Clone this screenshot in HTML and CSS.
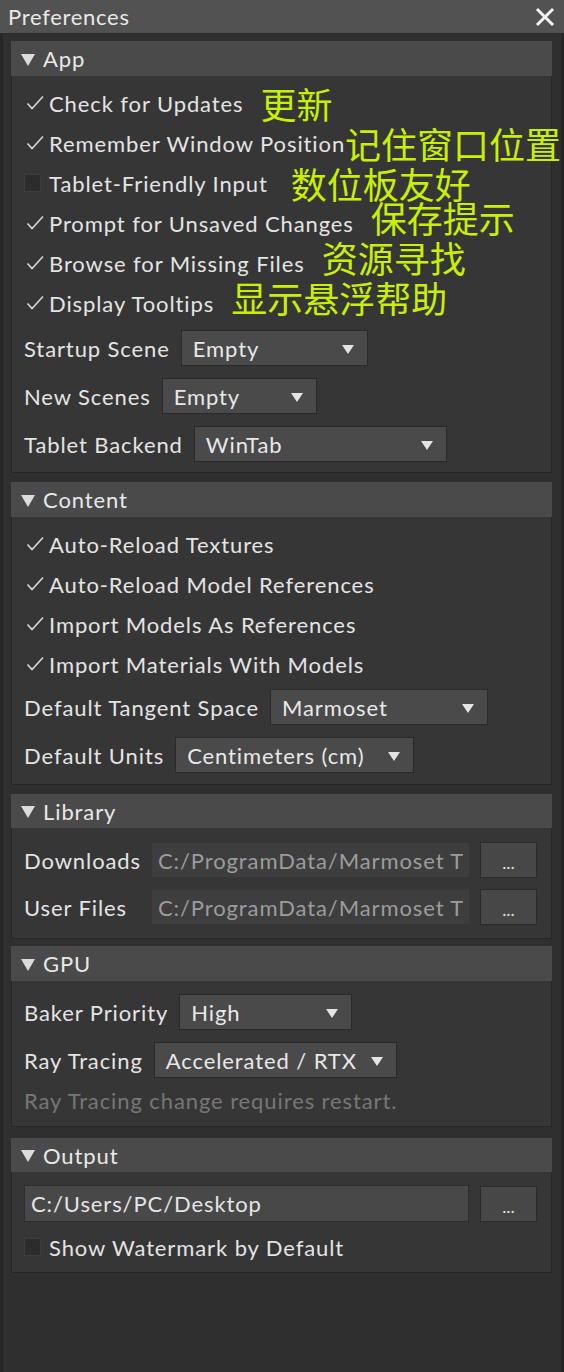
FILE: index.html
```html
<!DOCTYPE html>
<html>
<head>
<meta charset="utf-8">
<link rel="stylesheet" href="styles.css">
</head>
<body>
<div class="window">
  <div class="titlebar">
    <span class="title">Preferences</span>
    <svg class="close" width="20" height="20" viewBox="0 0 20 20"><path d="M3 3 L17 17 M17 3 L3 17" stroke="#f0f0f0" stroke-width="3" stroke-linecap="square"/></svg>
  </div>
  <div class="content">
    <section class="section">
      <div class="sec-head"><span class="tri"></span>App</div>
      <div class="sec-body">
        <div class="check-row"><span class="box"><svg viewBox="0 0 18 16" width="18" height="16"><path d="M1.5 8.5 L6 13.5 L17 1.5" fill="none" stroke="#d8d8d8" stroke-width="1.6"/></svg></span><span class="text">Check for Updates</span><span class="note">更新</span></div>
        <div class="check-row"><span class="box"><svg viewBox="0 0 18 16" width="18" height="16"><path d="M1.5 8.5 L6 13.5 L17 1.5" fill="none" stroke="#d8d8d8" stroke-width="1.6"/></svg></span><span class="text">Remember Window Position</span><span class="note note-tight">记住窗口位置</span></div>
        <div class="check-row"><span class="box box-empty"></span><span class="text">Tablet-Friendly Input</span><span class="note note-wide">数位板友好</span></div>
        <div class="check-row"><span class="box"><svg viewBox="0 0 18 16" width="18" height="16"><path d="M1.5 8.5 L6 13.5 L17 1.5" fill="none" stroke="#d8d8d8" stroke-width="1.6"/></svg></span><span class="text">Prompt for Unsaved Changes</span><span class="note note-up">保存提示</span></div>
        <div class="check-row"><span class="box"><svg viewBox="0 0 18 16" width="18" height="16"><path d="M1.5 8.5 L6 13.5 L17 1.5" fill="none" stroke="#d8d8d8" stroke-width="1.6"/></svg></span><span class="text">Browse for Missing Files</span><span class="note note-up">资源寻找</span></div>
        <div class="check-row"><span class="box"><svg viewBox="0 0 18 16" width="18" height="16"><path d="M1.5 8.5 L6 13.5 L17 1.5" fill="none" stroke="#d8d8d8" stroke-width="1.6"/></svg></span><span class="text">Display Tooltips</span><span class="note note-up">显示悬浮帮助</span></div>
        <div class="form-rows">
          <div class="form-row"><span class="label">Startup Scene</span><div class="dropdown dd-187"><span>Empty</span><span class="dd-tri"></span></div></div>
          <div class="form-row"><span class="label">New Scenes</span><div class="dropdown dd-155"><span>Empty</span><span class="dd-tri"></span></div></div>
          <div class="form-row"><span class="label">Tablet Backend</span><div class="dropdown dd-253"><span>WinTab</span><span class="dd-tri"></span></div></div>
        </div>
      </div>
    </section>

    <section class="section">
      <div class="sec-head"><span class="tri"></span>Content</div>
      <div class="sec-body body-pad-content">
        <div class="check-row"><span class="box"><svg viewBox="0 0 18 16" width="18" height="16"><path d="M1.5 8.5 L6 13.5 L17 1.5" fill="none" stroke="#d8d8d8" stroke-width="1.6"/></svg></span><span class="text">Auto-Reload Textures</span></div>
        <div class="check-row"><span class="box"><svg viewBox="0 0 18 16" width="18" height="16"><path d="M1.5 8.5 L6 13.5 L17 1.5" fill="none" stroke="#d8d8d8" stroke-width="1.6"/></svg></span><span class="text">Auto-Reload Model References</span></div>
        <div class="check-row"><span class="box"><svg viewBox="0 0 18 16" width="18" height="16"><path d="M1.5 8.5 L6 13.5 L17 1.5" fill="none" stroke="#d8d8d8" stroke-width="1.6"/></svg></span><span class="text">Import Models As References</span></div>
        <div class="check-row"><span class="box"><svg viewBox="0 0 18 16" width="18" height="16"><path d="M1.5 8.5 L6 13.5 L17 1.5" fill="none" stroke="#d8d8d8" stroke-width="1.6"/></svg></span><span class="text">Import Materials With Models</span></div>
        <div class="form-rows form-rows-tight">
          <div class="form-row"><span class="label">Default Tangent Space</span><div class="dropdown dd-218"><span>Marmoset</span><span class="dd-tri"></span></div></div>
          <div class="form-row"><span class="label">Default Units</span><div class="dropdown dd-239"><span>Centimeters (cm)</span><span class="dd-tri"></span></div></div>
        </div>
      </div>
    </section>

    <section class="section">
      <div class="sec-head sec-head-short"><span class="tri"></span>Library</div>
      <div class="sec-body body-pad-lib">
        <div class="path-grid">
          <span class="label">Downloads</span>
          <div class="field field-dim"><span class="clip">C:/ProgramData/Marmoset T</span></div>
          <div class="btn">...</div>
          <span class="label">User Files</span>
          <div class="field field-dim"><span class="clip">C:/ProgramData/Marmoset T</span></div>
          <div class="btn">...</div>
        </div>
      </div>
    </section>

    <section class="section sec-close">
      <div class="sec-head"><span class="tri"></span>GPU</div>
      <div class="sec-body body-pad">
        <div class="form-rows form-rows-flush">
          <div class="form-row"><span class="label">Baker Priority</span><div class="dropdown dd-173"><span>High</span><span class="dd-tri"></span></div></div>
          <div class="form-row"><span class="label">Ray Tracing</span><div class="dropdown dd-243"><span>Accelerated / RTX</span><span class="dd-tri"></span></div></div>
        </div>
        <div class="hint">Ray Tracing change requires restart.</div>
      </div>
    </section>

    <section class="section sec-far">
      <div class="sec-head sec-head-short"><span class="tri"></span>Output</div>
      <div class="sec-body body-pad-out">
        <div class="out-row">
          <div class="field field-out">C:/Users/PC/Desktop</div>
          <div class="btn">...</div>
        </div>
        <div class="check-row check-row-gap"><span class="box box-empty"></span><span class="text">Show Watermark by Default</span></div>
      </div>
    </section>
  </div>
</div>
</body>
</html>
```

FILE: styles.css
```css
html, body {
  margin: 0;
  padding: 0;
}
body {
  width: 564px;
  height: 1372px;
  overflow: hidden;
  background: #2f2f2f;
  font-family: Lato, "Liberation Sans", sans-serif;
  font-size: 22px;
  letter-spacing: 0.9px;
  color: #e4e4e4;
}
.window {
  height: 1372px;
  display: flex;
  flex-direction: column;
}
.titlebar {
  height: 34px;
  flex: none;
  background: #525252;
  border-bottom: 1px solid #2a2a2a;
  display: flex;
  align-items: center;
  justify-content: space-between;
  padding: 0 9px 0 8px;
  box-sizing: border-box;
}
.title {
  font-size: 22px;
  letter-spacing: 0.7px;
  color: #e8e8e8;
}
.close {
  display: block;
}
.content {
  flex: 1;
  border-left: 3px solid #262626;
  border-right: 3px solid #262626;
  padding: 7px 9px 0 8px;
  display: flex;
  flex-direction: column;
  gap: 9px;
}
.sec-close {
  margin-top: -2px;
}
.sec-far {
  margin-top: 2px;
}
.sec-head {
  height: 35px;
  background: #4a4a4a;
  display: flex;
  align-items: center;
  padding-left: 10px;
  color: #e8e8e8;
}
.sec-head-short {
  height: 34px;
}
.tri {
  width: 0;
  height: 0;
  border-left: 7.5px solid transparent;
  border-right: 7.5px solid transparent;
  border-top: 12px solid #dcdcdc;
  margin-right: 8px;
  margin-top: 2px;
}
.sec-body {
  background: #363636;
  border: 1px solid #262626;
  border-top: none;
  padding: 7px 12px 10px 12px;
}
.body-pad-content {
  padding-bottom: 11px;
}
.check-row {
  height: 40px;
  display: flex;
  align-items: center;
  white-space: nowrap;
}
.check-row-gap {
  margin-top: 5px;
}
.box {
  width: 18px;
  height: 18px;
  margin-left: 2px;
  margin-right: 5px;
  display: flex;
  align-items: center;
  justify-content: center;
  flex: none;
}
.box svg {
  display: block;
}
.box-empty {
  width: 17px;
  background: #2c2c2c;
  border: 1px solid #3c3c3c;
  box-sizing: border-box;
  margin-left: 0;
  margin-right: 8px;
}
.note {
  font-family: "Noto Sans CJK SC", sans-serif;
  font-size: 36px;
  letter-spacing: 0;
  color: #c8f000;
  margin-left: 17px;
  line-height: 1;
}
.note-tight {
  margin-left: 0;
}
.note-wide {
  margin-left: 23px;
}
.note-up {
  position: relative;
  top: -6px;
}
.form-rows {
  margin-top: 7px;
  display: flex;
  flex-direction: column;
  gap: 12px;
}
.form-rows-tight {
  margin-top: 5px;
}
.form-rows-flush {
  margin-top: 0;
}
.form-row {
  display: flex;
  align-items: center;
  gap: 11px;
}
.label {
  white-space: nowrap;
}
.dropdown {
  height: 36px;
  box-sizing: border-box;
  background: #4a4a4a;
  border: 1px solid #2a2a2a;
  display: flex;
  align-items: center;
  justify-content: space-between;
  padding: 0 13px 0 11px;
  color: #e8e8e8;
}
.dd-tri {
  width: 0;
  height: 0;
  border-left: 6.5px solid transparent;
  border-right: 6.5px solid transparent;
  border-top: 9px solid #e4e4e4;
  margin-top: 2px;
}
.dd-187 { width: 187px; }
.dd-155 { width: 155px; }
.dd-253 { width: 253px; }
.dd-218 { width: 218px; }
.dd-239 { width: 239px; }
.dd-173 { width: 173px; }
.dd-243 { width: 243px; }
.body-pad {
  padding: 13px 13px 12px 12px;
}
.body-pad-lib {
  padding: 14px 13px 13px 12px;
}
.path-grid {
  display: grid;
  grid-template-columns: 116px 317px 57px;
  column-gap: 12px;
  row-gap: 11px;
  align-items: center;
}
.path-grid .btn {
  margin-left: -1px;
}
.field {
  height: 34px;
  display: flex;
  align-items: center;
  padding: 0 6px;
  overflow: hidden;
  white-space: nowrap;
  box-sizing: border-box;
}
.field-dim {
  background: #3e3e3e;
  color: #9c9c9c;
}
.clip {
  display: block;
  overflow: hidden;
}
.field-out {
  width: 445px;
  height: 37px;
  background: #484848;
  border: 1px solid #2e2e2e;
  color: #e4e4e4;
}
.btn {
  width: 57px;
  height: 36px;
  box-sizing: border-box;
  background: #474747;
  border: 1px solid #2a2a2a;
  display: flex;
  align-items: flex-end;
  justify-content: center;
  padding-bottom: 6px;
  font-size: 18px;
  letter-spacing: 0;
  color: #e0e0e0;
  line-height: 1;
}
.hint {
  color: #777777;
  margin-top: 10px;
  height: 26px;
  line-height: 26px;
}
.body-pad-out {
  padding: 13px 13px 5px 12px;
}
.out-row {
  display: flex;
  align-items: center;
  gap: 11px;
}
```
